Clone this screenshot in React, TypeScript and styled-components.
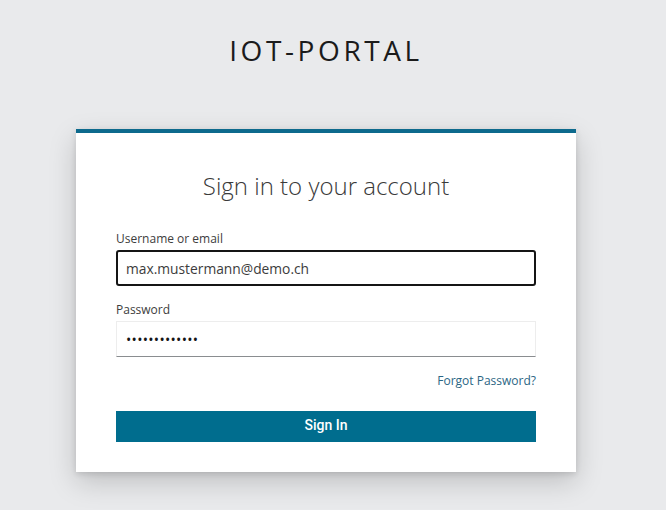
import React from "react";
import styled, { createGlobalStyle } from "styled-components";

const Global = createGlobalStyle`
  html, body { margin: 0; padding: 0; }
  body {
    background: #e9eaec;
    font-family: "Open Sans", "Liberation Sans", sans-serif;
    height: 510px;
    overflow: hidden;
  }
  * { box-sizing: border-box; }
`;

const Page = styled.div`
  width: 652px;
  display: flex;
  flex-direction: column;
  align-items: center;
`;

const Brand = styled.h1`
  margin: 30px 0 0;
  font-family: "Open Sans", sans-serif;
  font-weight: 400;
  font-size: 28px;
  line-height: 40px;
  letter-spacing: 3.6px;
  color: #1b1b1b;
`;

const Card = styled.div`
  margin-top: 59px;
  width: 500px;
  background: #fff;
  border-top: 4px solid #0d6a8d;
  padding: 38px 40px 30px;
  box-shadow: 0 10px 26px rgba(0, 0, 0, 0.18), 0 2px 6px rgba(0, 0, 0, 0.12);
  display: flex;
  flex-direction: column;
`;

const Title = styled.h2`
  margin: 0;
  text-align: center;
  font-weight: 300;
  font-size: 24px;
  line-height: 29px;
  color: #3a3a3a;
`;

const Field = styled.div<{ $mt: number }>`
  display: flex;
  flex-direction: column;
  margin-top: ${(p) => p.$mt}px;
`;

const Label = styled.label`
  font-size: 12px;
  line-height: 16px;
  color: #3d3d3d;
  margin-bottom: 3px;
`;

const Input = styled.div<{ $focused?: boolean }>`
  height: 36px;
  display: flex;
  align-items: center;
  font-size: 13.8px;
  color: #3c3c3c;
  ${(p) =>
    p.$focused
      ? `border: 2px solid #151515; border-radius: 3px; padding-left: 8px;`
      : `border: 1px solid #ededed; border-bottom-color: #8a8d90; padding-left: 9px;`}
`;

const Dots = styled.span`
  font-size: 14px;
  letter-spacing: 0.3px;
  color: #151515;
`;

const Links = styled.div`
  display: flex;
  justify-content: flex-end;
  margin-top: 16px;
`;

const Link = styled.a`
  font-size: 12px;
  line-height: 16px;
  color: #2b6684;
  text-decoration: none;
`;

const Button = styled.button`
  margin-top: 22px;
  height: 31px;
  padding: 0 0 4px;
  border: none;
  background: #006d8e;
  color: #fff;
  font-family: Roboto, "Open Sans", sans-serif;
  font-weight: 500;
  font-size: 14px;
  cursor: pointer;
`;

export default function App() {
  return (
    <>
      <Global />
      <Page>
        <Brand>IOT-PORTAL</Brand>
        <Card>
          <Title>Sign in to your account</Title>
          <Field $mt={31}>
            <Label>Username or email</Label>
            <Input $focused>max.mustermann@demo.ch</Input>
          </Field>
          <Field $mt={16}>
            <Label>Password</Label>
            <Input>
              <Dots>•••••••••••••</Dots>
            </Input>
          </Field>
          <Links>
            <Link href="#">Forgot Password?</Link>
          </Links>
          <Button>Sign In</Button>
        </Card>
      </Page>
    </>
  );
}
